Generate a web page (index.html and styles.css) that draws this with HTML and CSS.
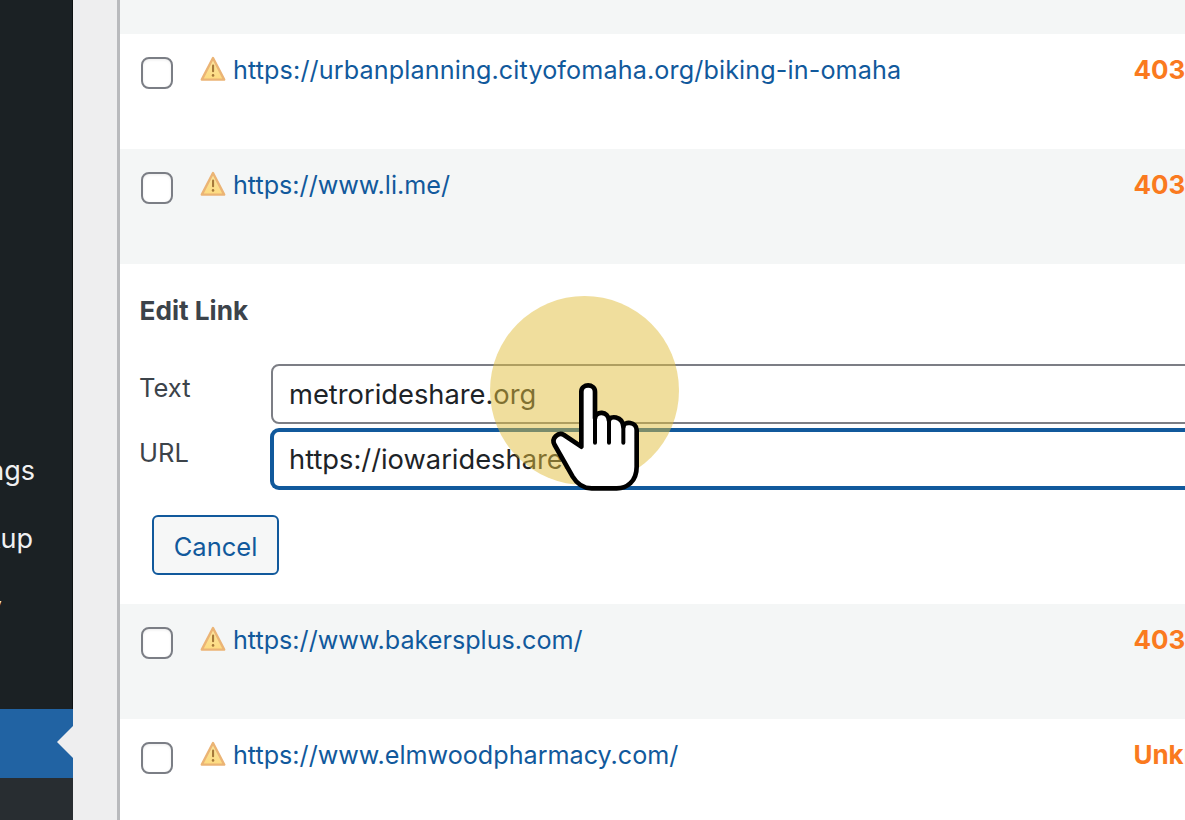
FILE: index.html
```html
<!DOCTYPE html>
<html lang="en">
<head>
<meta charset="utf-8">
<title>Broken Links</title>
<link rel="stylesheet" href="styles.css">
</head>
<body>
<svg class="sprite" width="0" height="0" aria-hidden="true">
  <defs>
    <linearGradient id="warn-fill" x1="0" y1="0" x2="0" y2="1">
      <stop offset="0" stop-color="#fbe5a0"/>
      <stop offset="1" stop-color="#fddb80"/>
    </linearGradient>
    <symbol id="warn" viewBox="0 0 26 26">
      <path d="M13 3 L24.2 24.6 H1.8 Z" fill="url(#warn-fill)" stroke="#ebb475" stroke-width="2.4" stroke-linejoin="round"/>
      <rect x="12" y="9.6" width="2.1" height="7.6" rx="1" fill="#a5783a"/>
      <circle cx="13.05" cy="20.4" r="1.3" fill="#a5783a"/>
    </symbol>
  </defs>
</svg>
<div class="app">
  <aside class="sidebar">
    <div class="menu-top">
      <div class="menu-item item-settings">Settings</div>
      <div class="menu-item item-backup">Backup</div>
      <div class="menu-item item-y">y</div>
    </div>
    <div class="menu-current"><span class="notch"></span></div>
    <div class="menu-sub"></div>
  </aside>
  <div class="gutter"></div>
  <main class="table">
    <div class="row alt short"></div>
    <div class="row">
      <span class="check"></span>
      <svg class="warn"><use href="#warn"/></svg>
      <a class="link link-long">https://urbanplanning.cityofomaha.org/biking-in-omaha</a>
      <span class="status">403</span>
    </div>
    <div class="row alt">
      <span class="check"></span>
      <svg class="warn"><use href="#warn"/></svg>
      <a class="link">https://www.li.me/</a>
      <span class="status">403</span>
    </div>
    <form class="edit">
      <h2 class="edit-title">Edit Link</h2>
      <div class="field">
        <label class="field-label">Text</label>
        <div class="input">metrorideshare.org</div>
      </div>
      <div class="field">
        <label class="field-label">URL</label>
        <div class="input focus">https://iowarideshare.org</div>
      </div>
      <button type="button" class="cancel">Cancel</button>
    </form>
    <div class="row alt">
      <span class="check"></span>
      <svg class="warn"><use href="#warn"/></svg>
      <a class="link">https://www.bakersplus.com/</a>
      <span class="status">403</span>
    </div>
    <div class="row">
      <span class="check"></span>
      <svg class="warn"><use href="#warn"/></svg>
      <a class="link">https://www.elmwoodpharmacy.com/</a>
      <span class="status">Unknown</span>
    </div>
  </main>
</div>
<div class="spot"></div>
<svg class="hand" viewBox="0 0 630 630" width="210" height="210">
  <path d="M304 470 V305 C304 280 345 280 345 305 V385 C346 362 385 362 387 392 C388 375 428 378 430 410 C432 392 470 395 470 420 V530 C470 575 440 595 410 595 H335 C305 595 290 580 278 560 L224 465 C212 445 235 425 252 435 Z" fill="#fff" stroke="#000" stroke-width="14" stroke-linejoin="round"/>
  <path d="M345 385 V458 M387 392 V458 M430 410 V458" fill="none" stroke="#000" stroke-width="12" stroke-linecap="round"/>
</svg>
</body>
</html>
```
FILE: styles.css
```css
* { box-sizing: border-box; }
html, body { margin: 0; height: 100%; overflow: hidden; background: #fff; }
body { width: 1185px; height: 820px; position: relative; font-family: Inter, "Liberation Sans", sans-serif; }
.sprite { position: absolute; }
.app { display: flex; width: 1185px; height: 820px; }
.sidebar { width: 73px; flex: none; background: #1b2124; display: flex; flex-direction: column; color: #f0f0f1; overflow: hidden; }
.menu-top { height: 709px; padding-top: 448px; display: flex; flex-direction: column; box-shadow: inset -1px 0 0 #0d1113; }
.menu-item { height: 68px; font-size: 27px; line-height: 46px; display: flex; justify-content: flex-end; padding-right: 38px; white-space: nowrap; }
.item-backup { padding-right: 40px; }
.item-y { padding-right: 71px; }
.menu-current { height: 69px; background: #2163a3; position: relative; }
.notch { position: absolute; right: 0; top: 17px; border: 16.5px solid transparent; border-left-width: 0; border-right-color: #eeeeef; }
.menu-sub { flex: 1; background: #282d31; }
.gutter { width: 44px; flex: none; background: #eeeeef; }
.table { flex: 1; min-width: 0; border-left: 3px solid #b9babd; display: flex; flex-direction: column; overflow: hidden; }
.row { height: 115px; flex: none; display: flex; align-items: flex-start; background: #fff; padding-left: 21px; position: relative; }
.row.alt { background: #f4f6f6; }
.row.short { height: 34px; }
.check { width: 32px; height: 32px; margin-top: 23px; border: 2px solid #7b7e85; border-radius: 8px; background: #fff; flex: none; box-shadow: inset 0 1px 3px rgba(0,0,0,.08); }
.warn { width: 26px; height: 26px; margin: 21px 0 0 27px; flex: none; }
.link { margin: 18px 0 0 7px; font-size: 25.15px; line-height: 36px; color: #11599c; white-space: nowrap; }
.link-long { letter-spacing: .13px; }
.status { position: absolute; left: 1013.4px; top: 18px; font-size: 26px; line-height: 36px; font-weight: 700; color: #fa7a1f; white-space: nowrap; }
.edit { height: 340px; flex: none; background: #fff; padding: 29px 0 0 19px; color: #3c434a; }
.edit-title { margin: 0 0 35px 0.5px; font-size: 26.2px; line-height: 36px; font-weight: 700; color: #3c434a; }
.field { display: flex; align-items: flex-start; margin-bottom: 5px; }
.field-label { width: 132px; flex: none; font-size: 25.5px; line-height: 48px; }
.input { flex: none; width: 1000px; height: 60px; border: 2px solid #7c7e85; border-radius: 8px; background: #fff; padding-left: 16px; font-size: 27.3px; line-height: 58px; color: #1d2327; white-space: nowrap; }
.input.focus { border: 3px solid #11599c; box-shadow: 0 0 0 1px #11599c; line-height: 56px; padding-left: 15px; }
.cancel { display: block; margin: 26px 0 0 13px; width: 127px; height: 60px; padding: 2px 0 0; border: 2px solid #11599c; border-radius: 6px; background: #f6f7f7; color: #11599c; font: 400 25.5px Inter, "Liberation Sans", sans-serif; }
.spot { position: absolute; left: 490px; top: 296px; width: 189px; height: 189px; border-radius: 50%; background: rgba(226, 190, 60, .5); }
.hand { position: absolute; left: 480px; top: 290px; }
```
